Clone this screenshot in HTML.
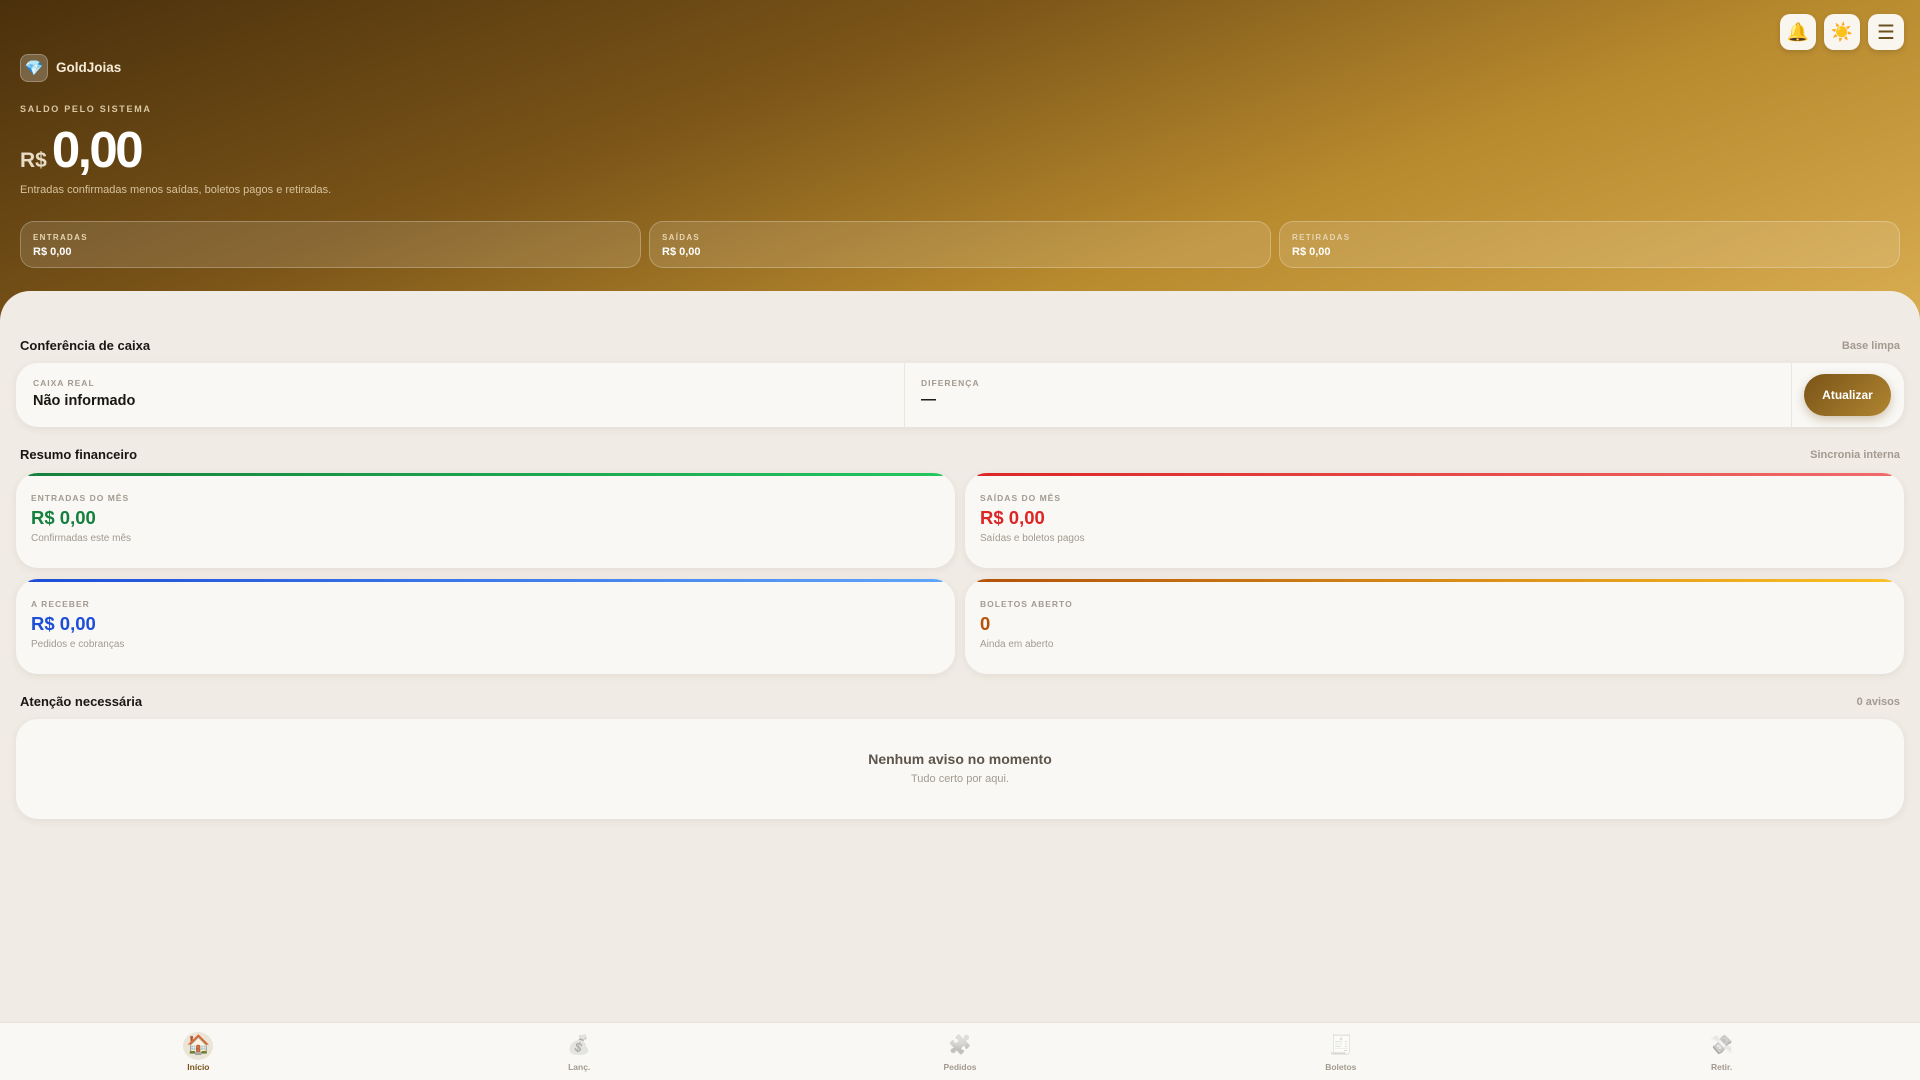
<!DOCTYPE html>
<html><head><meta charset="utf-8"><style>
*{box-sizing:border-box;margin:0;padding:0}
body{width:1920px;height:1080px;overflow:hidden;font-family:"Liberation Sans","Noto Sans CJK SC",sans-serif;background:#f0ebe5;position:relative}
.hdr{position:absolute;left:0;top:0;width:1920px;height:330px;background:linear-gradient(160deg,#4a300c 0%,#7a5418 35%,#b88a2e 65%,#d9ad52 100%)}
.tb{position:absolute;top:14px;width:36px;height:36px;border-radius:10px;background:#f9f6ef;box-shadow:0 2px 6px rgba(0,0,0,.15);display:flex;align-items:center;justify-content:center;font-size:18px}
.logo{position:absolute;left:20px;top:54px;width:28px;height:28px;border-radius:8px;background:rgba(255,255,255,.22);border:1px solid rgba(255,255,255,.25);display:flex;align-items:center;justify-content:center;font-size:15px}
.brand{position:absolute;left:56px;top:60px;color:#f5ead6;font-size:13.5px;font-weight:bold}
.lbl{position:absolute;left:20px;top:104px;color:#d9c7a3;font-size:9px;font-weight:bold;letter-spacing:1.7px}
.big{position:absolute;left:20px;top:120px;color:#fff;font-weight:bold;font-size:51px;letter-spacing:-2.5px}
.big span{font-size:21px;color:#e8dcc6;letter-spacing:0;margin-right:5px}
.sub{position:absolute;left:20px;top:184px;color:#d6c29c;font-size:11px}
.sc{position:absolute;top:221px;height:47px;border-radius:14px;background:rgba(255,255,255,.12);border:1px solid rgba(255,255,255,.25);padding:11px 12px}
.sc .l{font-size:8px;font-weight:bold;letter-spacing:1.3px;color:#e6d5b3}
.sc .v{font-size:11px;font-weight:bold;color:#fff;margin-top:4px}
.sheet{position:absolute;left:0;top:291px;width:1920px;height:789px;background:#f0ebe5;border-radius:30px 30px 0 0}
.st{position:absolute;left:20px;font-size:13px;font-weight:bold;color:#1a1612}
.sr{position:absolute;right:20px;font-size:11px;font-weight:bold;color:#a39a90}
.card{position:absolute;background:#f9f8f5;border-radius:22px;box-shadow:0 2px 8px rgba(80,60,30,.08)}
.cl{font-size:8.5px;font-weight:bold;letter-spacing:1px;color:#a39a90}
.mc{overflow:hidden;padding:0 15px}
.mc .bar{position:absolute;left:12px;right:12px;top:0;height:3px;border-radius:3px}
.mc .cl{margin-top:20px}
.mc .v{font-size:18.5px;font-weight:bold;margin-top:4px}
.mc .s{font-size:10px;color:#a39a90;margin-top:4px}
.nav{position:absolute;left:0;top:1022px;width:1920px;height:58px;background:#f9f8f4;border-top:1px solid #e6e0d6;display:flex;padding:0 8px}
.ni{flex:1;text-align:center;padding-top:9px}
.ni .i{font-size:19px;height:28px;line-height:28px;filter:grayscale(1);opacity:.45}
.ni .t{font-size:8.5px;font-weight:bold;color:#a39a90;margin-top:2px}
.ni.a .i{filter:none;opacity:1;display:inline-block;width:30px;border-radius:50%;background:#ebe5d8}
.ni.a .t{color:#7a5418}
</style></head><body>
<div class="hdr"></div>
<div class="tb" style="left:1780px">🔔</div>
<div class="tb" style="left:1824px">☀️</div>
<div class="tb" style="left:1868px;color:#6b5020;font-size:20px">☰</div>
<div class="logo">💎</div>
<div class="brand">GoldJoias</div>
<div class="lbl">SALDO PELO SISTEMA</div>
<div class="big"><span>R$</span>0,00</div>
<div class="sub">Entradas confirmadas menos saídas, boletos pagos e retiradas.</div>
<div class="sc" style="left:20px;width:621px"><div class="l">ENTRADAS</div><div class="v">R$ 0,00</div></div>
<div class="sc" style="left:649px;width:622px"><div class="l">SAÍDAS</div><div class="v">R$ 0,00</div></div>
<div class="sc" style="left:1279px;width:621px"><div class="l">RETIRADAS</div><div class="v">R$ 0,00</div></div>
<div class="sheet"></div>
<div class="st" style="top:338px">Conferência de caixa</div>
<div class="sr" style="top:340px">Base limpa</div>
<div class="card" style="left:16px;top:363px;width:1888px;height:64px">
 <div style="position:absolute;left:17px;top:15px"><div class="cl">CAIXA REAL</div><div style="font-size:14.5px;font-weight:bold;color:#1a1612;margin-top:5px">Não informado</div></div>
 <div style="position:absolute;left:888px;top:0;bottom:0;border-left:1px solid #ebe6de"></div>
 <div style="position:absolute;left:905px;top:15px"><div class="cl">DIFERENÇA</div><div style="font-size:15px;font-weight:bold;color:#1a1612;margin-top:3px">—</div></div>
 <div style="position:absolute;left:1775px;top:0;bottom:0;border-left:1px solid #ebe6de"></div>
 <div style="position:absolute;left:1788px;top:11px;width:87px;height:42px;border-radius:21px;background:linear-gradient(135deg,#7a5418,#b08530);color:#fff;font-size:12px;font-weight:bold;display:flex;align-items:center;justify-content:center;box-shadow:0 4px 10px rgba(120,80,20,.3)">Atualizar</div>
</div>
<div class="st" style="top:447px">Resumo financeiro</div>
<div class="sr" style="top:449px">Sincronia interna</div>
<div class="card mc" style="left:16px;top:473px;width:939px;height:95px"><div class="bar" style="background:linear-gradient(90deg,#15803d,#22c55e)"></div><div class="cl">ENTRADAS DO MÊS</div><div class="v" style="color:#15803d">R$ 0,00</div><div class="s">Confirmadas este mês</div></div>
<div class="card mc" style="left:965px;top:473px;width:939px;height:95px"><div class="bar" style="background:linear-gradient(90deg,#dc2626,#f06a6a)"></div><div class="cl">SAÍDAS DO MÊS</div><div class="v" style="color:#dc2626">R$ 0,00</div><div class="s">Saídas e boletos pagos</div></div>
<div class="card mc" style="left:16px;top:579px;width:939px;height:95px"><div class="bar" style="background:linear-gradient(90deg,#1d4ed8,#60a5fa)"></div><div class="cl">A RECEBER</div><div class="v" style="color:#1d4ed8">R$ 0,00</div><div class="s">Pedidos e cobranças</div></div>
<div class="card mc" style="left:965px;top:579px;width:939px;height:95px"><div class="bar" style="background:linear-gradient(90deg,#b45309,#fbbf24)"></div><div class="cl">BOLETOS ABERTO</div><div class="v" style="color:#b45309">0</div><div class="s">Ainda em aberto</div></div>
<div class="st" style="top:694px">Atenção necessária</div>
<div class="sr" style="top:696px">0 avisos</div>
<div class="card" style="left:16px;top:719px;width:1888px;height:100px;text-align:center">
 <div style="font-size:14px;font-weight:bold;color:#5e544a;margin-top:32px">Nenhum aviso no momento</div>
 <div style="font-size:11px;color:#a39a90;margin-top:6px">Tudo certo por aqui.</div>
</div>
<div class="nav">
 <div class="ni a"><div class="i">🏠</div><div class="t">Início</div></div>
 <div class="ni"><div class="i">💰</div><div class="t">Lanç.</div></div>
 <div class="ni"><div class="i">🧩</div><div class="t">Pedidos</div></div>
 <div class="ni"><div class="i">🧾</div><div class="t">Boletos</div></div>
 <div class="ni"><div class="i">💸</div><div class="t">Retir.</div></div>
</div>
</body></html>
